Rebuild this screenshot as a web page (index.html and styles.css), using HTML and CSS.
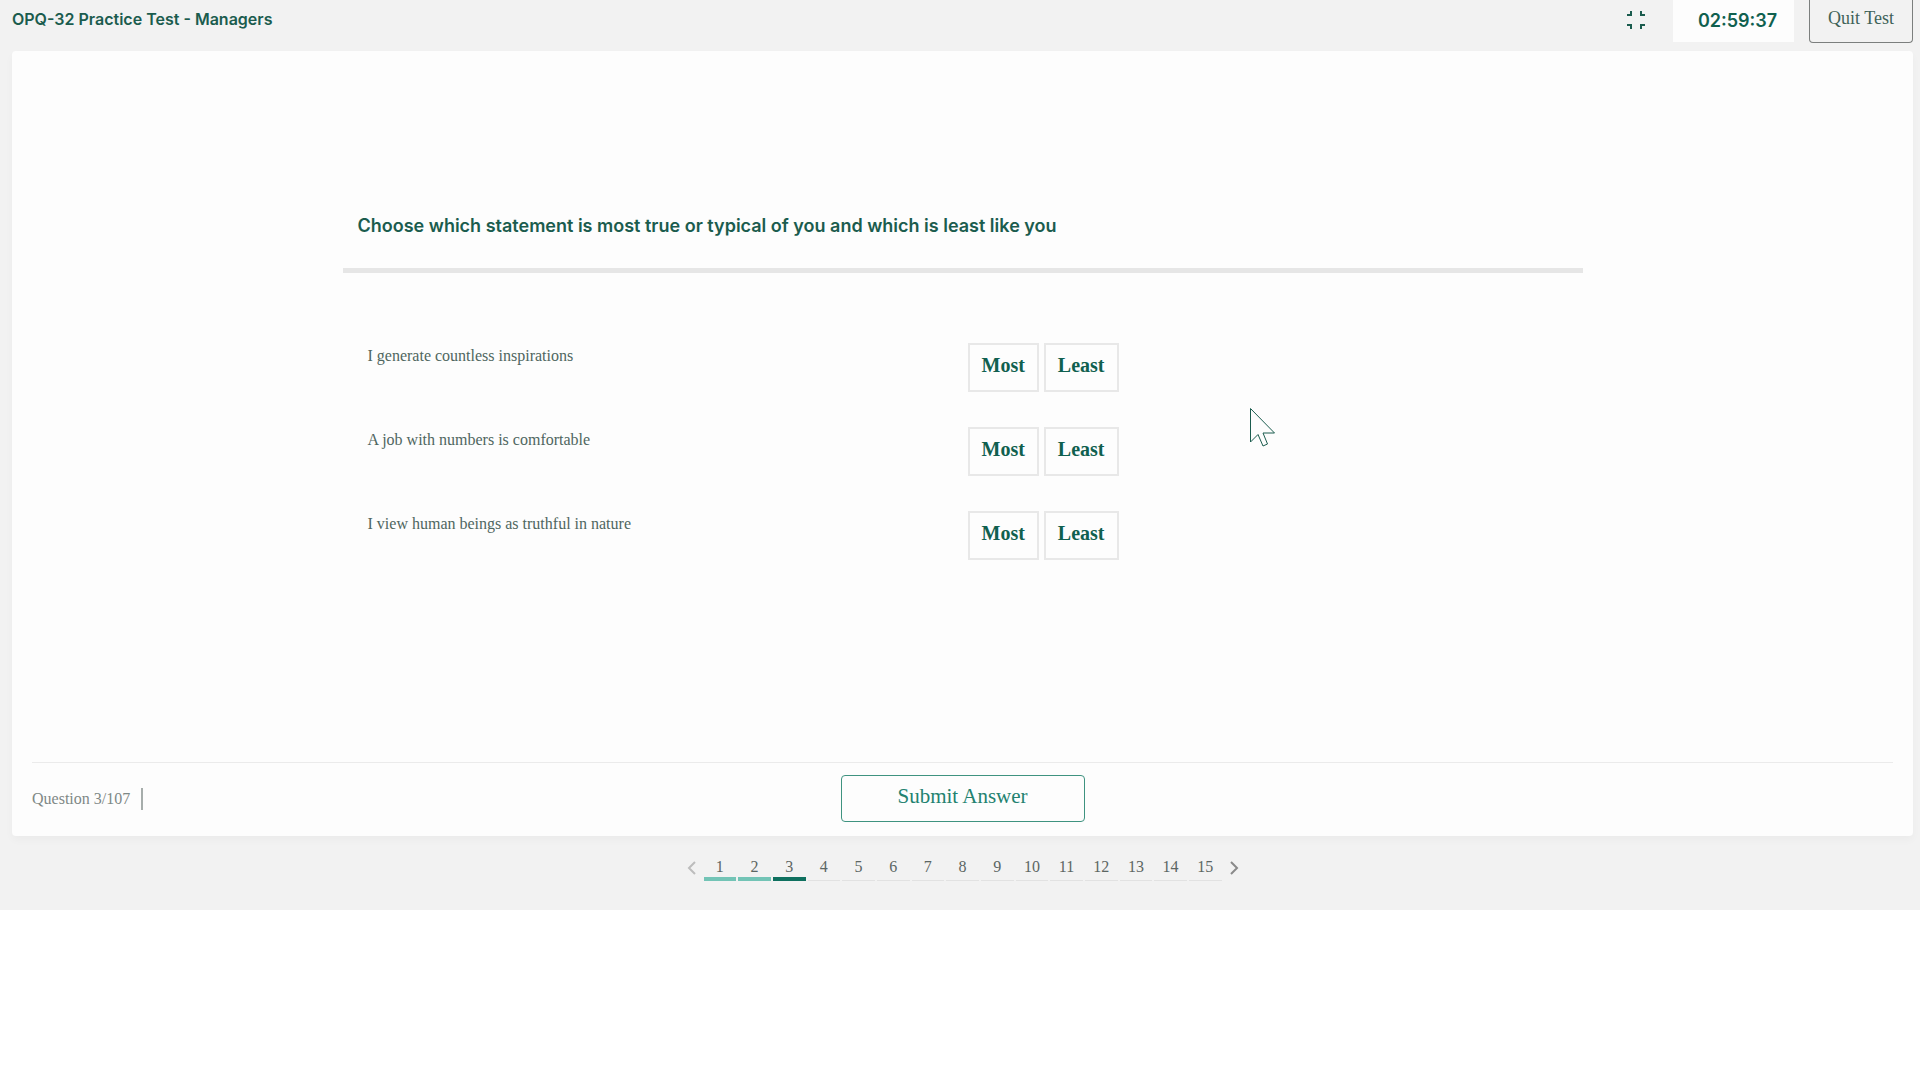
FILE: index.html
```html
<!DOCTYPE html>
<html lang="en">
<head>
    <meta charset="UTF-8">
    <meta name="viewport" content="width=device-width, initial-scale=1.0">
    <title>OPQ-32 Practice Test - Managers</title>
    <link rel="stylesheet" href="styles.css">
</head>
<body>

  <div class="test">

    <header class="topbar">
      <h1 class="test-name">OPQ-32 Practice Test - Managers</h1>
      <button class="icon-btn" type="button" aria-label="Exit full screen">
        <svg width="20" height="20" viewBox="0 0 20 20">
          <path d="M1 5H5V1M15 1V5H19M1 15H5V19M15 19V15H19" />
        </svg>
      </button>
      <div class="timer">02:59:37</div>
      <button class="quit-btn" type="button">Quit Test</button>
    </header>

    <main class="card">
      <section class="question">
        <h2 class="prompt">Choose which statement is most true or typical of you and which is least like you</h2>

        <div class="statements">
          <div class="statement">
            <p>I generate countless inspirations</p>
            <div class="choices">
              <button class="choice" type="button">Most</button>
              <button class="choice" type="button">Least</button>
            </div>
          </div>
          <div class="statement">
            <p>A job with numbers is comfortable</p>
            <div class="choices">
              <button class="choice" type="button">Most</button>
              <button class="choice" type="button">Least</button>
            </div>
          </div>
          <div class="statement">
            <p>I view human beings as truthful in nature</p>
            <div class="choices">
              <button class="choice" type="button">Most</button>
              <button class="choice" type="button">Least</button>
            </div>
          </div>
        </div>
      </section>

      <footer class="card-footer">
        <div class="progress">Question 3/107</div>
        <button class="submit-btn" type="button">Submit Answer</button>
      </footer>
    </main>

    <nav class="pager" aria-label="Questions">
      <button class="arrow prev" type="button" aria-label="Previous">
        <svg width="10" height="16" viewBox="0 0 10 16"><path d="M8 2L2 8L8 14" /></svg>
      </button>
      <div class="pages">
        <a href="#" class="done">1</a>
        <a href="#" class="done">2</a>
        <a href="#" class="current">3</a>
        <a href="#">4</a>
        <a href="#">5</a>
        <a href="#">6</a>
        <a href="#">7</a>
        <a href="#">8</a>
        <a href="#">9</a>
        <a href="#">10</a>
        <a href="#">11</a>
        <a href="#">12</a>
        <a href="#">13</a>
        <a href="#">14</a>
        <a href="#">15</a>
      </div>
      <button class="arrow" type="button" aria-label="Next">
        <svg width="10" height="16" viewBox="0 0 10 16"><path d="M2 2L8 8L2 14" /></svg>
      </button>
    </nav>

  </div>

  <!-- mouse pointer -->
  <svg class="pointer" width="28" height="42" viewBox="0 0 28 42">
    <path d="M1.500 1.500V35L9 27.500L14 39L18.500 37L14 26H25.500Z" />
  </svg>

</body>
</html>
```

FILE: styles.css
```css
* {
  box-sizing: border-box;
}

body {
  margin: 0;
  background: #fff;
  color: #4f6660;
  font-family: "Liberation Serif", serif;
  font-size: 16px;
}

h1, h2, p {
  margin: 0;
}

button {
  padding: 0;
  border: 0;
  background: none;
  font-family: inherit;
  cursor: pointer;
}

svg {
  display: block;
  fill: none;
}

.test {
  padding: 0 7px 29px 12px;
  background: #f2f2f2;
}

/* top bar */
.topbar {
  display: flex;
  align-items: flex-start;
  height: 51px;
}

.test-name {
  flex: 1;
  font: 600 16px/38px Inter, sans-serif;
  color: #1b5c4e;
}

.icon-btn {
  margin: 10px 27px 0 0;
}

.icon-btn svg {
  stroke: #1b5c4e;
  stroke-width: 2;
}

.timer {
  width: 121px;
  margin-right: 15px;
  padding-left: 8px;
  background: #fdfdfd;
  color: #10604f;
  font: 600 18px/42px Inter, sans-serif;
  text-align: center;
}

.quit-btn {
  width: 104px;
  height: 43px;
  padding-bottom: 6px;
  border: 1px solid #7c7f7e;
  border-top: 0;
  border-radius: 0 0 4px 4px;
  color: #3f6258;
  font-size: 18px;
}

/* question card */
.card {
  padding: 0 20px;
  border-radius: 4px;
  background: #fdfdfd;
  box-shadow: 0 4px 8px rgba(0, 0, 0, 0.03);
}

.question {
  max-width: 1240px;
  margin: 0 auto;
  padding: 161px 0 202px;
}

.prompt {
  padding: 0 15px 28px;
  border-bottom: 5px solid #e6e6e6;
  color: #1b5c4e;
  font: 600 18px/28px Inter, sans-serif;
}

.statements {
  display: grid;
  gap: 35px;
  padding: 70px 25px 0;
}

.statement {
  display: grid;
  grid-template-columns: 600px 1fr;
}

.statement p {
  line-height: 26px;
}

.choices {
  display: flex;
  gap: 5px;
}

.choice {
  height: 49px;
  padding: 0 12px 4px;
  border: 2px solid #e8e8e8;
  color: #10604f;
  font-size: 20px;
  font-weight: 700;
}

.card-footer {
  display: grid;
  grid-template-columns: 1fr auto 1fr;
  align-items: center;
  padding: 12px 0 14px;
  border-top: 1px solid #ebebeb;
}

.progress {
  justify-self: start;
  padding-right: 11px;
  border-right: 2px solid #a6adab;
  color: #7f8886;
  line-height: 22px;
}

.submit-btn {
  width: 244px;
  height: 47px;
  padding-bottom: 4px;
  border: 1px solid #3f9380;
  border-radius: 4px;
  color: #238270;
  font-size: 21px;
}

/* question pager */
.pager {
  display: flex;
  justify-content: center;
  gap: 7px;
  padding-top: 20px;
}

.arrow {
  height: 24px;
}

.arrow svg {
  stroke: #8a8a8a;
  stroke-width: 2;
}

.prev svg {
  stroke: #bdbdbd;
}

.pages {
  display: flex;
  gap: 2px;
  width: 518px;
}

.pages a {
  flex: 1;
  height: 25px;
  border-bottom: 1px solid #e2e2e2;
  color: #5c6663;
  line-height: 22px;
  text-align: center;
  text-decoration: none;
}

.pages .done {
  border-bottom: 4px solid #73c4b6;
}

.pages .current {
  border-bottom: 4px solid #0f705f;
}

.pointer {
  position: absolute;
  top: 407px;
  left: 1249px;
  stroke: #1b5c4e;
  stroke-width: 1;
  pointer-events: none;
}
```
